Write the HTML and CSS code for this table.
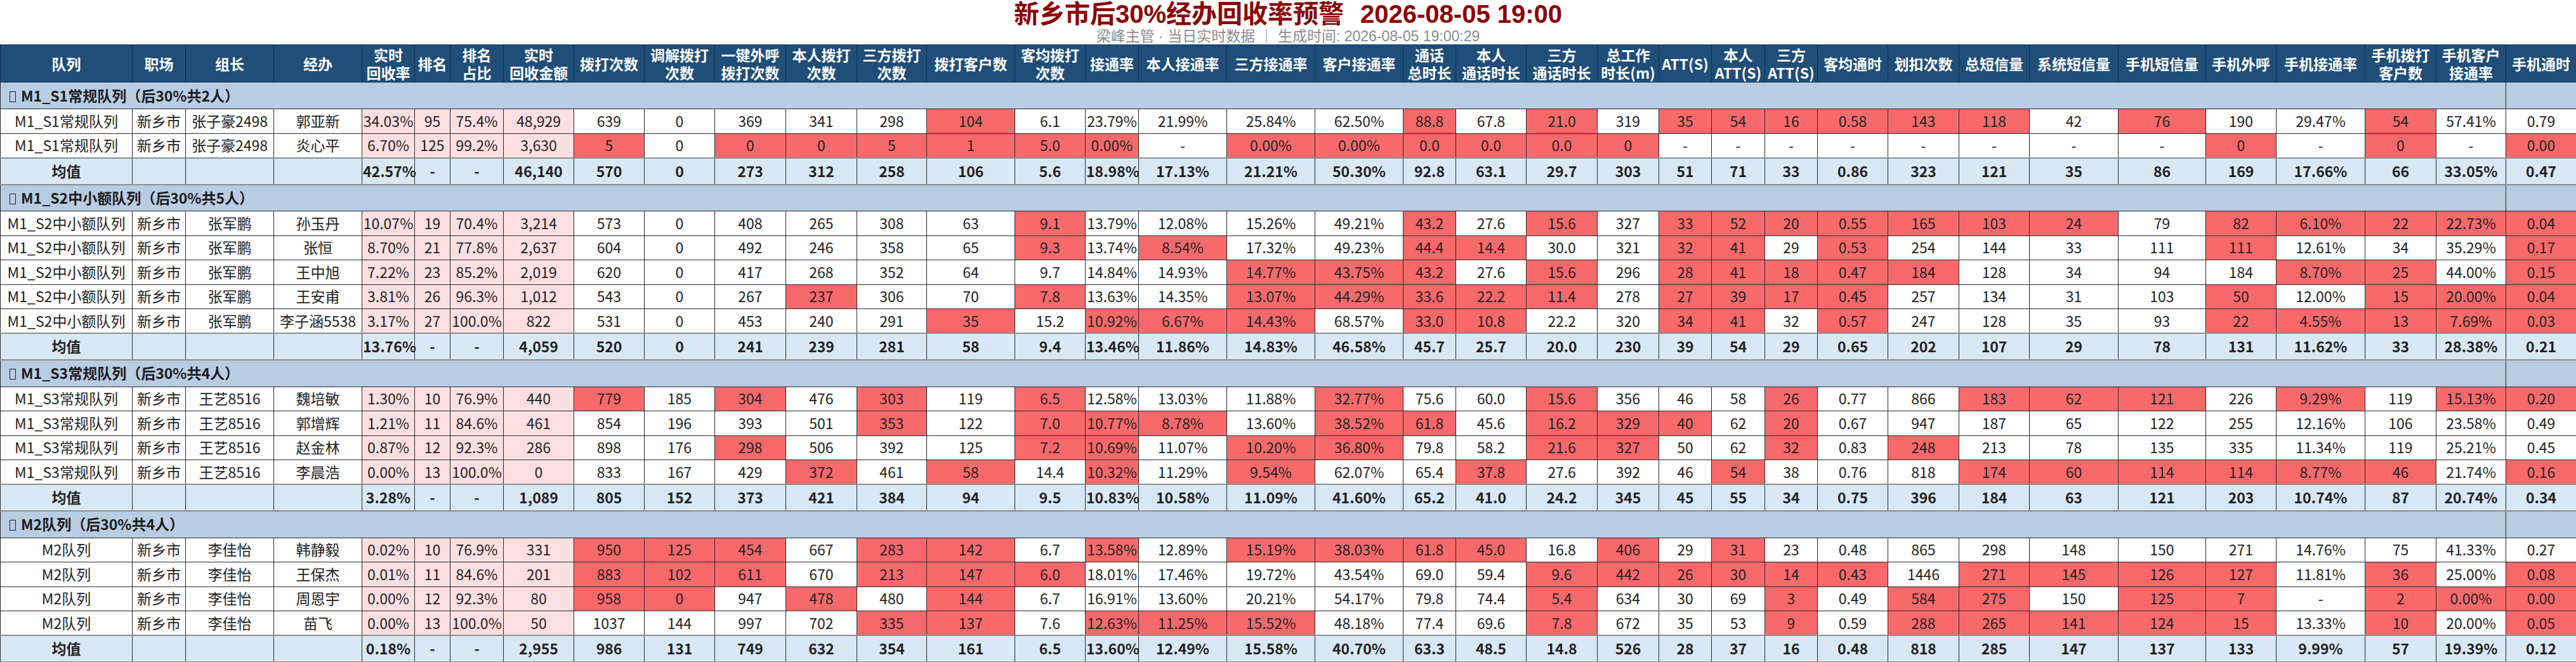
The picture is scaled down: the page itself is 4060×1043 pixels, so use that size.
FILE: index.html
```html
<!DOCTYPE html>
<html lang="zh-CN">
<head>
<meta charset="utf-8">
<title>新乡市后30%经办回收率预警</title>
<link rel="stylesheet" href="styles.css">
</head>
<body>
<div class="title">
  <div class="h1">新乡市后30%经办回收率预警<span class="time">2026-08-05 19:00</span></div>
  <div class="sub">梁峰主管 · 当日实时数据 ｜ 生成时间: 2026-08-05 19:00:29</div>
</div>
<table class="grid">
<colgroup>
<col class="w208"><col class="w84"><col class="w139"><col class="w139"><col class="w83"><col class="w56"><col class="w84"><col class="w111">
<col class="w111"><col class="w111"><col class="w112"><col class="w112"><col class="w110"><col class="w139"><col class="w111">
<col class="w84"><col class="w139"><col class="w139"><col class="w139">
<col class="w83"><col class="w111"><col class="w112"><col class="w97">
<col class="w83"><col class="w84"><col class="w83"><col class="w111">
<col class="w112"><col class="w111"><col class="w140"><col class="w138"><col class="w111"><col class="w140"><col class="w112"><col class="w110"><col class="w111">
</colgroup>
<thead>
<tr>
<th>队列</th><th>职场</th><th>组长</th><th>经办</th><th>实时<br>回收率</th><th>排名</th><th>排名<br>占比</th><th>实时<br>回收金额</th>
<th>拨打次数</th><th>调解拨打<br>次数</th><th>一键外呼<br>拨打次数</th><th>本人拨打<br>次数</th><th>三方拨打<br>次数</th><th>拨打客户数</th><th>客均拨打<br>次数</th>
<th>接通率</th><th>本人接通率</th><th>三方接通率</th><th>客户接通率</th>
<th>通话<br>总时长</th><th>本人<br>通话时长</th><th>三方<br>通话时长</th><th>总工作<br>时长(m)</th>
<th>ATT(S)</th><th>本人<br>ATT(S)</th><th>三方<br>ATT(S)</th><th>客均通时</th>
<th>划扣次数</th><th>总短信量</th><th>系统短信量</th><th>手机短信量</th><th>手机外呼</th><th>手机接通率</th><th>手机拨打<br>客户数</th><th>手机客户<br>接通率</th><th>手机通时</th>
</tr>
</thead>
<tbody>
<tr class="g"><td colspan="35"><span class="box"></span>M1_S1常规队列（后30%共2人）</td><td class="gx"></td></tr>
<tr class="d"><td>M1_S1常规队列</td><td>新乡市</td><td>张子豪2498</td><td>郭亚新</td><td class="p">34.03%</td><td class="p">95</td><td class="p">75.4%</td><td class="p">48,929</td><td>639</td><td>0</td><td>369</td><td>341</td><td>298</td><td class="r">104</td><td>6.1</td><td>23.79%</td><td>21.99%</td><td>25.84%</td><td>62.50%</td><td class="r">88.8</td><td>67.8</td><td class="r">21.0</td><td>319</td><td class="r">35</td><td class="r">54</td><td class="r">16</td><td class="r">0.58</td><td class="r">143</td><td class="r">118</td><td>42</td><td class="r">76</td><td>190</td><td>29.47%</td><td class="r">54</td><td>57.41%</td><td>0.79</td></tr>
<tr class="d"><td>M1_S1常规队列</td><td>新乡市</td><td>张子豪2498</td><td>炎心平</td><td class="p">6.70%</td><td class="p">125</td><td class="p">99.2%</td><td class="p">3,630</td><td class="r">5</td><td>0</td><td class="r">0</td><td class="r">0</td><td class="r">5</td><td class="r">1</td><td class="r">5.0</td><td class="r">0.00%</td><td>-</td><td class="r">0.00%</td><td class="r">0.00%</td><td class="r">0.0</td><td class="r">0.0</td><td class="r">0.0</td><td class="r">0</td><td>-</td><td>-</td><td>-</td><td>-</td><td>-</td><td>-</td><td>-</td><td>-</td><td class="r">0</td><td>-</td><td class="r">0</td><td>-</td><td class="r">0.00</td></tr>
<tr class="a"><td>均值</td><td></td><td></td><td></td><td>42.57%</td><td>-</td><td>-</td><td>46,140</td><td>570</td><td>0</td><td>273</td><td>312</td><td>258</td><td>106</td><td>5.6</td><td>18.98%</td><td>17.13%</td><td>21.21%</td><td>50.30%</td><td>92.8</td><td>63.1</td><td>29.7</td><td>303</td><td>51</td><td>71</td><td>33</td><td>0.86</td><td>323</td><td>121</td><td>35</td><td>86</td><td>169</td><td>17.66%</td><td>66</td><td>33.05%</td><td>0.47</td></tr>

<tr class="g"><td colspan="35"><span class="box"></span>M1_S2中小额队列（后30%共5人）</td><td class="gx"></td></tr>
<tr class="d"><td>M1_S2中小额队列</td><td>新乡市</td><td>张军鹏</td><td>孙玉丹</td><td class="p">10.07%</td><td class="p">19</td><td class="p">70.4%</td><td class="p">3,214</td><td>573</td><td>0</td><td>408</td><td>265</td><td>308</td><td>63</td><td class="r">9.1</td><td>13.79%</td><td>12.08%</td><td>15.26%</td><td>49.21%</td><td class="r">43.2</td><td>27.6</td><td class="r">15.6</td><td>327</td><td class="r">33</td><td class="r">52</td><td class="r">20</td><td class="r">0.55</td><td class="r">165</td><td class="r">103</td><td class="r">24</td><td>79</td><td class="r">82</td><td class="r">6.10%</td><td class="r">22</td><td class="r">22.73%</td><td class="r">0.04</td></tr>
<tr class="d"><td>M1_S2中小额队列</td><td>新乡市</td><td>张军鹏</td><td>张恒</td><td class="p">8.70%</td><td class="p">21</td><td class="p">77.8%</td><td class="p">2,637</td><td>604</td><td>0</td><td>492</td><td>246</td><td>358</td><td>65</td><td class="r">9.3</td><td>13.74%</td><td class="r">8.54%</td><td>17.32%</td><td>49.23%</td><td class="r">44.4</td><td class="r">14.4</td><td>30.0</td><td>321</td><td class="r">32</td><td class="r">41</td><td>29</td><td class="r">0.53</td><td>254</td><td>144</td><td>33</td><td>111</td><td class="r">111</td><td>12.61%</td><td>34</td><td>35.29%</td><td class="r">0.17</td></tr>
<tr class="d"><td>M1_S2中小额队列</td><td>新乡市</td><td>张军鹏</td><td>王中旭</td><td class="p">7.22%</td><td class="p">23</td><td class="p">85.2%</td><td class="p">2,019</td><td>620</td><td>0</td><td>417</td><td>268</td><td>352</td><td>64</td><td>9.7</td><td>14.84%</td><td>14.93%</td><td class="r">14.77%</td><td class="r">43.75%</td><td class="r">43.2</td><td>27.6</td><td class="r">15.6</td><td>296</td><td class="r">28</td><td class="r">41</td><td class="r">18</td><td class="r">0.47</td><td class="r">184</td><td>128</td><td>34</td><td>94</td><td>184</td><td class="r">8.70%</td><td class="r">25</td><td>44.00%</td><td class="r">0.15</td></tr>
<tr class="d"><td>M1_S2中小额队列</td><td>新乡市</td><td>张军鹏</td><td>王安甫</td><td class="p">3.81%</td><td class="p">26</td><td class="p">96.3%</td><td class="p">1,012</td><td>543</td><td>0</td><td>267</td><td class="r">237</td><td>306</td><td>70</td><td class="r">7.8</td><td>13.63%</td><td>14.35%</td><td class="r">13.07%</td><td class="r">44.29%</td><td class="r">33.6</td><td class="r">22.2</td><td class="r">11.4</td><td>278</td><td class="r">27</td><td class="r">39</td><td class="r">17</td><td class="r">0.45</td><td>257</td><td>134</td><td>31</td><td>103</td><td class="r">50</td><td>12.00%</td><td class="r">15</td><td class="r">20.00%</td><td class="r">0.04</td></tr>
<tr class="d"><td>M1_S2中小额队列</td><td>新乡市</td><td>张军鹏</td><td>李子涵5538</td><td class="p">3.17%</td><td class="p">27</td><td class="p">100.0%</td><td class="p">822</td><td>531</td><td>0</td><td>453</td><td>240</td><td>291</td><td class="r">35</td><td>15.2</td><td class="r">10.92%</td><td class="r">6.67%</td><td class="r">14.43%</td><td>68.57%</td><td class="r">33.0</td><td class="r">10.8</td><td>22.2</td><td>320</td><td class="r">34</td><td class="r">41</td><td>32</td><td class="r">0.57</td><td>247</td><td>128</td><td>35</td><td>93</td><td class="r">22</td><td class="r">4.55%</td><td class="r">13</td><td class="r">7.69%</td><td class="r">0.03</td></tr>
<tr class="a"><td>均值</td><td></td><td></td><td></td><td>13.76%</td><td>-</td><td>-</td><td>4,059</td><td>520</td><td>0</td><td>241</td><td>239</td><td>281</td><td>58</td><td>9.4</td><td>13.46%</td><td>11.86%</td><td>14.83%</td><td>46.58%</td><td>45.7</td><td>25.7</td><td>20.0</td><td>230</td><td>39</td><td>54</td><td>29</td><td>0.65</td><td>202</td><td>107</td><td>29</td><td>78</td><td>131</td><td>11.62%</td><td>33</td><td>28.38%</td><td>0.21</td></tr>

<tr class="g"><td colspan="35"><span class="box"></span>M1_S3常规队列（后30%共4人）</td><td class="gx"></td></tr>
<tr class="d"><td>M1_S3常规队列</td><td>新乡市</td><td>王艺8516</td><td>魏培敏</td><td class="p">1.30%</td><td class="p">10</td><td class="p">76.9%</td><td class="p">440</td><td class="r">779</td><td>185</td><td class="r">304</td><td>476</td><td class="r">303</td><td>119</td><td class="r">6.5</td><td>12.58%</td><td>13.03%</td><td>11.88%</td><td class="r">32.77%</td><td>75.6</td><td>60.0</td><td class="r">15.6</td><td>356</td><td>46</td><td>58</td><td class="r">26</td><td>0.77</td><td>866</td><td class="r">183</td><td class="r">62</td><td class="r">121</td><td>226</td><td class="r">9.29%</td><td>119</td><td class="r">15.13%</td><td class="r">0.20</td></tr>
<tr class="d"><td>M1_S3常规队列</td><td>新乡市</td><td>王艺8516</td><td>郭增辉</td><td class="p">1.21%</td><td class="p">11</td><td class="p">84.6%</td><td class="p">461</td><td>854</td><td>196</td><td>393</td><td>501</td><td class="r">353</td><td>122</td><td class="r">7.0</td><td class="r">10.77%</td><td class="r">8.78%</td><td>13.60%</td><td class="r">38.52%</td><td class="r">61.8</td><td>45.6</td><td class="r">16.2</td><td class="r">329</td><td class="r">40</td><td>62</td><td class="r">20</td><td>0.67</td><td>947</td><td>187</td><td>65</td><td>122</td><td>255</td><td>12.16%</td><td>106</td><td>23.58%</td><td>0.49</td></tr>
<tr class="d"><td>M1_S3常规队列</td><td>新乡市</td><td>王艺8516</td><td>赵金林</td><td class="p">0.87%</td><td class="p">12</td><td class="p">92.3%</td><td class="p">286</td><td>898</td><td>176</td><td class="r">298</td><td>506</td><td>392</td><td>125</td><td class="r">7.2</td><td class="r">10.69%</td><td>11.07%</td><td class="r">10.20%</td><td class="r">36.80%</td><td>79.8</td><td>58.2</td><td class="r">21.6</td><td class="r">327</td><td>50</td><td>62</td><td class="r">32</td><td>0.83</td><td class="r">248</td><td>213</td><td>78</td><td>135</td><td>335</td><td>11.34%</td><td>119</td><td>25.21%</td><td>0.45</td></tr>
<tr class="d"><td>M1_S3常规队列</td><td>新乡市</td><td>王艺8516</td><td>李晨浩</td><td class="p">0.00%</td><td class="p">13</td><td class="p">100.0%</td><td class="p">0</td><td>833</td><td>167</td><td>429</td><td class="r">372</td><td>461</td><td class="r">58</td><td>14.4</td><td class="r">10.32%</td><td>11.29%</td><td class="r">9.54%</td><td>62.07%</td><td>65.4</td><td class="r">37.8</td><td>27.6</td><td>392</td><td>46</td><td class="r">54</td><td>38</td><td>0.76</td><td>818</td><td class="r">174</td><td class="r">60</td><td class="r">114</td><td class="r">114</td><td class="r">8.77%</td><td class="r">46</td><td>21.74%</td><td class="r">0.16</td></tr>
<tr class="a"><td>均值</td><td></td><td></td><td></td><td>3.28%</td><td>-</td><td>-</td><td>1,089</td><td>805</td><td>152</td><td>373</td><td>421</td><td>384</td><td>94</td><td>9.5</td><td>10.83%</td><td>10.58%</td><td>11.09%</td><td>41.60%</td><td>65.2</td><td>41.0</td><td>24.2</td><td>345</td><td>45</td><td>55</td><td>34</td><td>0.75</td><td>396</td><td>184</td><td>63</td><td>121</td><td>203</td><td>10.74%</td><td>87</td><td>20.74%</td><td>0.34</td></tr>

<tr class="g"><td colspan="35"><span class="box"></span>M2队列（后30%共4人）</td><td class="gx"></td></tr>
<tr class="d"><td>M2队列</td><td>新乡市</td><td>李佳怡</td><td>韩静毅</td><td class="p">0.02%</td><td class="p">10</td><td class="p">76.9%</td><td class="p">331</td><td class="r">950</td><td class="r">125</td><td class="r">454</td><td>667</td><td class="r">283</td><td class="r">142</td><td>6.7</td><td class="r">13.58%</td><td>12.89%</td><td class="r">15.19%</td><td class="r">38.03%</td><td class="r">61.8</td><td class="r">45.0</td><td>16.8</td><td class="r">406</td><td>29</td><td class="r">31</td><td>23</td><td>0.48</td><td>865</td><td>298</td><td>148</td><td>150</td><td>271</td><td>14.76%</td><td>75</td><td>41.33%</td><td>0.27</td></tr>
<tr class="d"><td>M2队列</td><td>新乡市</td><td>李佳怡</td><td>王保杰</td><td class="p">0.01%</td><td class="p">11</td><td class="p">84.6%</td><td class="p">201</td><td class="r">883</td><td class="r">102</td><td class="r">611</td><td>670</td><td class="r">213</td><td class="r">147</td><td class="r">6.0</td><td>18.01%</td><td>17.46%</td><td>19.72%</td><td>43.54%</td><td>69.0</td><td>59.4</td><td class="r">9.6</td><td class="r">442</td><td class="r">26</td><td class="r">30</td><td class="r">14</td><td class="r">0.43</td><td>1446</td><td class="r">271</td><td class="r">145</td><td class="r">126</td><td class="r">127</td><td>11.81%</td><td class="r">36</td><td>25.00%</td><td class="r">0.08</td></tr>
<tr class="d"><td>M2队列</td><td>新乡市</td><td>李佳怡</td><td>周恩宇</td><td class="p">0.00%</td><td class="p">12</td><td class="p">92.3%</td><td class="p">80</td><td class="r">958</td><td class="r">0</td><td>947</td><td class="r">478</td><td>480</td><td class="r">144</td><td>6.7</td><td>16.91%</td><td>13.60%</td><td>20.21%</td><td>54.17%</td><td>79.8</td><td>74.4</td><td class="r">5.4</td><td>634</td><td>30</td><td>69</td><td class="r">3</td><td>0.49</td><td class="r">584</td><td class="r">275</td><td>150</td><td class="r">125</td><td class="r">7</td><td>-</td><td class="r">2</td><td class="r">0.00%</td><td class="r">0.00</td></tr>
<tr class="d"><td>M2队列</td><td>新乡市</td><td>李佳怡</td><td>苗飞</td><td class="p">0.00%</td><td class="p">13</td><td class="p">100.0%</td><td class="p">50</td><td>1037</td><td>144</td><td>997</td><td>702</td><td class="r">335</td><td class="r">137</td><td>7.6</td><td class="r">12.63%</td><td class="r">11.25%</td><td class="r">15.52%</td><td>48.18%</td><td>77.4</td><td>69.6</td><td class="r">7.8</td><td>672</td><td>35</td><td>53</td><td class="r">9</td><td>0.59</td><td class="r">288</td><td class="r">265</td><td class="r">141</td><td class="r">124</td><td class="r">15</td><td>13.33%</td><td class="r">10</td><td>20.00%</td><td class="r">0.05</td></tr>
<tr class="a"><td>均值</td><td></td><td></td><td></td><td>0.18%</td><td>-</td><td>-</td><td>2,955</td><td>986</td><td>131</td><td>749</td><td>632</td><td>354</td><td>161</td><td>6.5</td><td>13.60%</td><td>12.49%</td><td>15.58%</td><td>40.70%</td><td>63.3</td><td>48.5</td><td>14.8</td><td>526</td><td>28</td><td>37</td><td>16</td><td>0.48</td><td>818</td><td>285</td><td>147</td><td>137</td><td>133</td><td>9.99%</td><td>57</td><td>19.39%</td><td>0.12</td></tr>
</tbody>
</table>
</body>
</html>
```

FILE: styles.css
```css
html, body {
  margin: 0;
  padding: 0;
  background: #ffffff;
}
body {
  width: 4060px;
  font-family: "Noto Sans CJK SC", "Noto Sans", "Liberation Sans", sans-serif;
  color: #222222;
}
.title {
  height: 70px;
  text-align: center;
  font-family: "Liberation Sans", "Noto Sans CJK SC", sans-serif;
}
.h1 {
  font-size: 40px;
  font-weight: 700;
  color: #8b0000;
  line-height: 45px;
}
.h1 .time {
  margin-left: 26px;
}
.sub {
  font-size: 23px;
  line-height: 25.5px;
  color: #8c8c8c;
}
table.grid {
  border-collapse: collapse;
  table-layout: fixed;
  width: 4060px;
  font-size: 23px;
  line-height: 1.2;
  border-top: 1px solid #111111;
}
.w56 { width: 56px; }
.w83 { width: 83px; }
.w84 { width: 84px; }
.w97 { width: 97px; }
.w110 { width: 110px; }
.w111 { width: 111px; }
.w112 { width: 112px; }
.w138 { width: 138px; }
.w139 { width: 139px; }
.w140 { width: 140px; }
.w208 { width: 208px; }

.grid th {
  background: #1f4e79;
  color: #ffffff;
  font-weight: 700;
  height: 58px;
  line-height: 28px;
  padding: 0;
  border: 1px solid #10304f;
  white-space: nowrap;
}
.grid td {
  border: 1px solid #2a2a2a;
  text-align: center;
  padding: 0 1px;
  white-space: nowrap;
  background: #ffffff;
}
.grid tr.d {
  height: 38.5px;
}
.grid tr.g {
  height: 42px;
}
.grid tr.g td {
  background: #b8cce4;
  font-weight: 700;
  text-align: left;
  padding-left: 14px;
  color: #1c1c1c;
}
.grid tr.g td.gx {
  padding: 0;
}
.box {
  display: inline-block;
  width: 8px;
  height: 15px;
  border: 1.5px solid #222222;
  margin-right: 8px;
  vertical-align: -1px;
}
.grid tr.a {
  height: 42px;
}
.grid tr.a td {
  background: #d9e8f6;
  font-weight: 700;
  border-top: 2px solid #8e8e8e;
  border-bottom: 2px solid #8e8e8e;
}
.grid td.p {
  background: #fddfe2;
}
.grid td.r {
  background: #f8696b;
}
```
